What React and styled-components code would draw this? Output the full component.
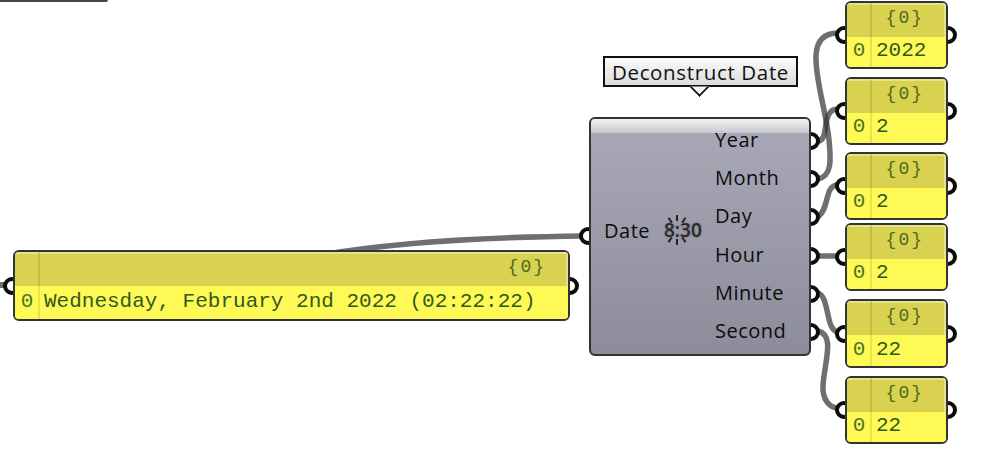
import React from "react";
import styled, { createGlobalStyle } from "styled-components";

const Global = createGlobalStyle`
  html, body { margin: 0; padding: 0; background: #fff; }
  body { overflow: hidden; }
`;

const Canvas = styled.div`
  position: relative;
  width: 1004px;
  height: 451px;
  overflow: hidden;
  isolation: isolate;
  background: #fff;
`;

const TopEdge = styled.div`
  position: absolute;
  left: 0;
  top: 0;
  width: 108px;
  height: 2px;
  background: #444;
  border-bottom-right-radius: 2px;
`;

const Wires = styled.svg`
  position: absolute;
  inset: 0;
  z-index: 0;
`;

const Wire = styled.path`
  fill: none;
  stroke: rgba(50, 50, 50, 0.7);
  stroke-width: ${(p) => p.$w || 5.5}px;
`;

const Node = styled.div`
  position: absolute;
  left: ${(p) => p.$x}px;
  top: ${(p) => p.$y}px;
  width: ${(p) => p.$w}px;
  height: ${(p) => p.$h}px;
`;

const Port = styled.span`
  position: absolute;
  z-index: 1;
  box-sizing: border-box;
  width: 18px;
  height: 18px;
  border: 4px solid #0c0c0c;
  border-radius: 50%;
  background: #fff;
  top: ${(p) => (p.$top != null ? `${p.$top - 9}px` : "calc(50% - 9px)")};
  ${(p) => (p.$side === "in" ? "left: -10px;" : "right: -9px;")}
`;

const ParamBody = styled.div`
  position: relative;
  z-index: 2;
  box-sizing: border-box;
  width: 100%;
  height: 100%;
  display: grid;
  grid-template-columns: 25px 1fr;
  grid-template-rows: 34px 1fr;
  border: 2px solid #333;
  border-radius: 6px;
  overflow: hidden;
  font-family: "Liberation Mono", monospace;
  font-size: 21px;
  line-height: 1;
`;

const HeadIndex = styled.div`
  background: #d8d250;
  border-right: 2px solid #c3bc47;
  border-top: 2px solid #e6e290;
`;

const HeadPath = styled.div`
  background: #d8d250;
  border-top: 2px solid #e6e290;
  border-right: 2px solid #e6e290;
  color: #4d6a20;
  font-size: 18px;
  letter-spacing: 2px;
  display: flex;
  align-items: center;
  justify-content: flex-end;
  padding-right: 20px;
  padding-bottom: 7px;
`;

const DataIndex = styled.div`
  background: #fff955;
  border-right: 2px solid #e8e24e;
  color: #4a7427;
  display: flex;
  align-items: center;
  justify-content: center;
  padding-left: 1px;
  padding-bottom: 3px;
`;

const DataValue = styled.div`
  background: #fff955;
  color: #2f5a1e;
  display: flex;
  align-items: center;
  padding-left: 4px;
  padding-bottom: 3px;
  white-space: pre;
`;

const ComponentBody = styled.div`
  position: relative;
  z-index: 2;
  box-sizing: border-box;
  width: 100%;
  height: 100%;
  display: flex;
  flex-direction: column;
  border: 2px solid #333;
  border-radius: 6px;
  overflow: hidden;
  background: linear-gradient(#aaa9b8, #8d8c9a);
  font-family: "Open Sans", sans-serif;
  font-size: 20px;
  letter-spacing: 0.5px;
  color: #0c0c0c;
`;

const Cap = styled.div`
  flex: none;
  height: 14px;
  background: linear-gradient(#f4f4f6, #c6c6ce);
`;

const ComponentMain = styled.div`
  flex: 1;
  display: grid;
  grid-template-columns: 124px 1fr;
`;

const InputSide = styled.div`
  display: flex;
  align-items: center;
  gap: 14px;
  padding-left: 13px;
  padding-bottom: 27px;
`;

const OutputSide = styled.div`
  display: flex;
  flex-direction: column;
  margin-top: -12px;
`;

const OutputLabel = styled.div`
  height: 38.2px;
  line-height: 38.2px;
`;

const Clock = styled.div`
  position: relative;
  font-size: 19px;
  font-weight: 600;
  letter-spacing: 0;
  color: #2b2b2b;
  text-shadow: 0 0 2px rgba(40, 40, 40, 0.45);
`;

const ClockRays = styled.svg`
  position: absolute;
  left: -5px;
  top: -5px;
  width: 36px;
  height: 36px;
  pointer-events: none;
  filter: blur(0.4px);
`;

const Tooltip = styled.div`
  position: absolute;
  z-index: 3;
  left: 603px;
  top: 56px;
  box-sizing: border-box;
  width: 195px;
  height: 31px;
  border: 2px solid #111;
  background: linear-gradient(#fbfbfb, #dcdcdc);
  display: flex;
  align-items: center;
  justify-content: center;
  font-family: "Open Sans", sans-serif;
  font-size: 20.5px;
  letter-spacing: 0.65px;
  color: #111;
  &::after {
    content: "";
    position: absolute;
    left: 87px;
    top: 21px;
    width: 15px;
    height: 15px;
    box-sizing: border-box;
    background: #f6f6f6;
    border-right: 2px solid #111;
    border-bottom: 2px solid #111;
    clip-path: polygon(100% 0, 100% 100%, 0 100%);
    transform: rotate(45deg);
  }
`;

const params = [
  { y: 1, h: 68, value: "2022" },
  { y: 77, h: 68, value: "2" },
  { y: 152, h: 68, value: "2" },
  { y: 223, h: 68, value: "2" },
  { y: 299, h: 69, value: "22" },
  { y: 376, h: 68, value: "22" },
];

const outputs = ["Year", "Month", "Day", "Hour", "Minute", "Second"];

const wirePaths = [
  "M818 179 C832 176 831 160 829 140 C826 110 815 80 816 55 C817 40 825 33 838 33",
  "M818 141 C830 141 820 109 838 109",
  "M818 217 C830 208 824 185 838 185",
  "M818 256 L838 256",
  "M818 293 C830 297 825 330 838 332",
  "M818 331 C835 335 825 360 823 385 C822 400 830 408 838 408",
];

const rays = [0, 35, 145, 180, 215, 325];

function Param({ x, y, w, h, value }) {
  return (
    <Node $x={x} $y={y} $w={w} $h={h}>
      <Port $side="in" />
      <Port $side="out" />
      <ParamBody>
        <HeadIndex />
        <HeadPath>{"{0}"}</HeadPath>
        <DataIndex>0</DataIndex>
        <DataValue>{value}</DataValue>
      </ParamBody>
    </Node>
  );
}

export default function App() {
  return (
    <Canvas>
      <Global />
      <TopEdge />
      <Wires width="1004" height="451" viewBox="0 0 1004 451">
        <Wire d="M0 285 L8 285" $w={6} />
        <Wire d="M320 255 C390 243 480 237 585 236" />
        {wirePaths.map((d) => (
          <Wire key={d} d={d} />
        ))}
      </Wires>

      <Param x={13} y={250} w={557} h={71} value="Wednesday, February 2nd 2022 (02:22:22)" />

      <Tooltip>Deconstruct Date</Tooltip>

      <Node $x={589} $y={117} $w={222} $h={239}>
        <Port $side="in" $top={119} />
        {outputs.map((name, i) => (
          <Port key={name} $side="out" $top={24 + i * 38.2} />
        ))}
        <ComponentBody>
          <Cap />
          <ComponentMain>
            <InputSide>
              <span>Date</span>
              <Clock>
                8:30
                <ClockRays viewBox="0 0 36 36">
                  {rays.map((a) => (
                    <line
                      key={a}
                      x1="18"
                      y1="9"
                      x2="18"
                      y2="3"
                      stroke="#222"
                      strokeWidth="2"
                      transform={`rotate(${a} 18 18)`}
                    />
                  ))}
                </ClockRays>
              </Clock>
            </InputSide>
            <OutputSide>
              {outputs.map((name) => (
                <OutputLabel key={name}>{name}</OutputLabel>
              ))}
            </OutputSide>
          </ComponentMain>
        </ComponentBody>
      </Node>

      {params.map((p) => (
        <Param key={p.y} x={845} w={103} {...p} />
      ))}
    </Canvas>
  );
}
